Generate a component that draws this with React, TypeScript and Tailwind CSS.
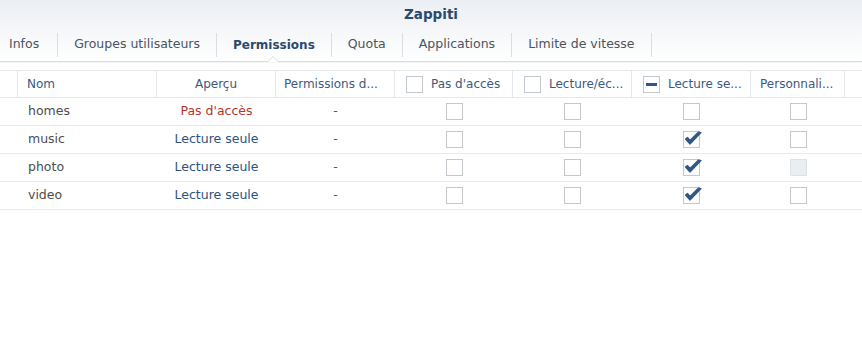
import React from "react";

const cols = "grid grid-cols-[18px_139px_119px_119px_118px_119px_119px_94px_1fr]";
const cell = "border-r border-[#e3e7eb] flex items-center";

const tabs = ["Infos", "Groupes utilisateurs", "Permissions", "Quota", "Applications", "Limite de vitesse"];

type Row = { name: string; preview: string; denied?: boolean; ro: boolean; disabledCustom?: boolean };

const rows: Row[] = [
  { name: "homes", preview: "Pas d'accès", denied: true, ro: false },
  { name: "music", preview: "Lecture seule", ro: true },
  { name: "photo", preview: "Lecture seule", ro: true, disabledCustom: true },
  { name: "video", preview: "Lecture seule", ro: true },
];

const Box = ({ checked = false, disabled = false, dash = false }: { checked?: boolean; disabled?: boolean; dash?: boolean }) => (
  <span
    className={`relative inline-block w-[17px] h-[17px] border ${
      disabled ? "border-[#dde2e7] bg-[#e9eef3]" : "border-[#c3c8cd] bg-white"
    }`}
  >
    {dash && <span className="absolute left-[2px] top-[6px] w-[11px] h-[3px] bg-[#2f5787]" />}
    {checked && (
      <svg className="absolute -left-px -top-[3px]" width="20" height="18" viewBox="0 0 20 18">
        <path d="M2.5 10 L7 15 L18 3.5 L15.5 3 L7 11.5 L4.5 8.5 Z" fill="#2f5787" stroke="#2f5787" strokeWidth="1.2" strokeLinejoin="round" />
      </svg>
    )}
  </span>
);

export default function App() {
  return (
    <div className="w-[862px] h-[341px] bg-white text-[12px] font-['DejaVu_Sans',Verdana,sans-serif] overflow-hidden">
      <div className="bg-gradient-to-b from-[#ebeff4] to-white">
        <div className="h-[28px] flex items-center justify-center font-bold text-[13.5px] text-[#2b4a6e]">Zappiti</div>
        <div className="relative h-[34px] flex items-center border-b border-[#d7dce1] shadow-[0_1px_1px_rgba(0,0,0,0.04)] text-[12.5px]">
          {tabs.map((t) => (
            <div
              key={t}
              className={`h-[24px] flex items-center px-[16px] first:pl-[9px] first:pr-[18px] border-r border-[#d9dee3] ${
                t === "Permissions" ? "font-bold text-[12px] text-[#2b4a6e]" : "text-[#4a5560]"
              }`}
            >
              {t}
            </div>
          ))}
          <span className="absolute left-[267px] -bottom-px w-0 h-0 border-x-[6px] border-x-transparent border-b-[6px] border-b-[#d7dce1]" />
          <span className="absolute left-[268px] -bottom-px w-0 h-0 border-x-[5px] border-x-transparent border-b-[5px] border-b-white" />
        </div>
      </div>

      <div className="mt-[8px] border-t border-[#e3e7eb]">
        <div className={`${cols} h-[27px] border-b border-[#e3e7eb] text-[#3b5a7d]`}>
          <div className={cell} />
          <div className={`${cell} pl-[9px]`}>Nom</div>
          <div className={`${cell} justify-center`}>Aperçu</div>
          <div className={`${cell} pl-[8px]`}>Permissions d...</div>
          <div className={`${cell} pl-[11px] gap-[8px]`}><Box />Pas d'accès</div>
          <div className={`${cell} pl-[11px] gap-[8px]`}><Box />Lecture/éc...</div>
          <div className={`${cell} pl-[11px] gap-[8px]`}><Box dash />Lecture se...</div>
          <div className={`${cell} pl-[9px]`}>Personnali...</div>
          <div />
        </div>
        {rows.map((r) => (
          <div key={r.name} className={`${cols} h-[28px] border-b border-[#e9ecef] text-[12.5px]`}>
            <div />
            <div className="flex items-center pl-[10px] text-[#4d4d4d]">{r.name}</div>
            <div className={`flex items-center justify-center ${r.denied ? "text-[#b8342a]" : "text-[#2c5282]"}`}>{r.preview}</div>
            <div className="flex items-center justify-center text-[#555]">-</div>
            <div className="flex items-center justify-center"><Box /></div>
            <div className="flex items-center justify-center"><Box /></div>
            <div className="flex items-center justify-center"><Box checked={r.ro} /></div>
            <div className="flex items-center justify-center"><Box disabled={r.disabledCustom} /></div>
            <div />
          </div>
        ))}
      </div>
    </div>
  );
}
